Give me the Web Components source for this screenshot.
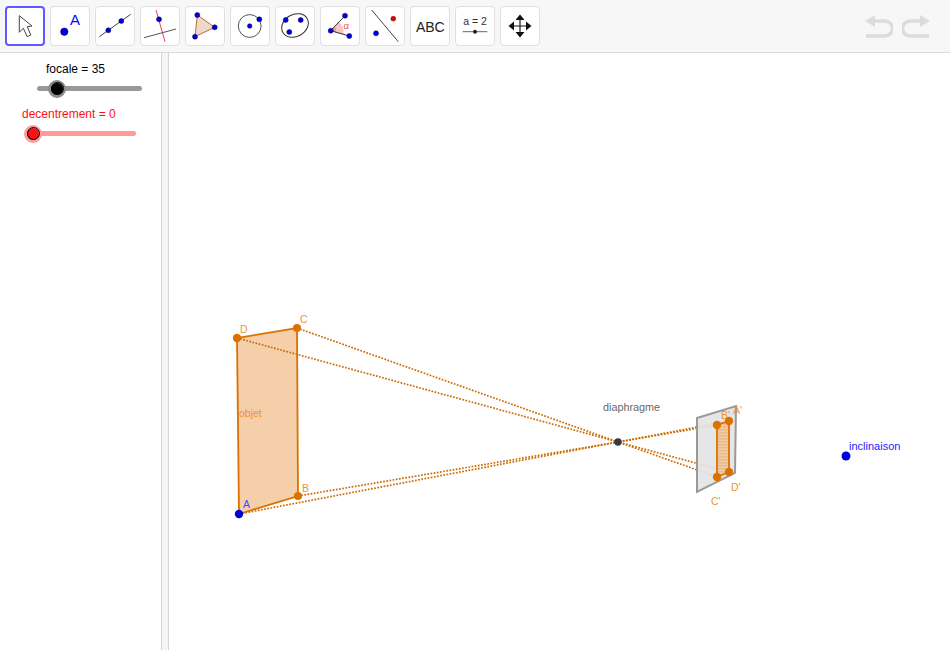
<!DOCTYPE html>
<html>
<head>
<meta charset="utf-8">
<title>focale</title>
<style>
	html, body { margin: 0; height: 100%; background: #fff; overflow: hidden; }
	body { font-family: "Liberation Sans", Arial, sans-serif; }
</style>
</head>
<body>
<ggb-app>
	<ggb-toolbar slot="toolbar">
		<ggb-tool active>
			<svg viewBox="0 0 40 40"><path d="M14.300 9.700v16.600l4-4 4 8.400 3.400-1.700-3.400-8.300 4.700-.7z" fill="#fff" stroke="#444" stroke-width="1" stroke-linejoin="round"/></svg>
		</ggb-tool>
		<ggb-tool>
			<svg viewBox="0 0 40 40"><circle cx="14.300" cy="25.700" r="3.700" fill="#0000d8" stroke="#000060" stroke-width=".5"/><text x="20" y="19" font-size="15" fill="#0a0aee">A</text></svg>
		</ggb-tool>
		<ggb-tool>
			<svg viewBox="0 0 40 40"><path d="M4.300 30.700L35.700 8.300" stroke="#444" stroke-width="1"/><circle cx="13.300" cy="24.300" r="2.500" fill="#0000d8" stroke="#000060" stroke-width=".5"/><circle cx="26.300" cy="15" r="2.500" fill="#0000d8" stroke="#000060" stroke-width=".5"/></svg>
		</ggb-tool>
		<ggb-tool>
			<svg viewBox="0 0 40 40"><path d="M16 4l9 31.700" stroke="#f03c50" stroke-width="1"/><path d="M4 31.700L36 23" stroke="#555" stroke-width="1"/><circle cx="19" cy="13.300" r="2.500" fill="#0000d8" stroke="#000060" stroke-width=".5"/></svg>
		</ggb-tool>
		<ggb-tool>
			<svg viewBox="0 0 40 40"><path d="M12.300 9L29.700 21.300 10 30.700z" fill="#eed8c8" stroke="#b8703a" stroke-width="1"/><circle cx="12.300" cy="9" r="2.500" fill="#0000d8" stroke="#000060" stroke-width=".5"/><circle cx="29.700" cy="21.300" r="2.500" fill="#0000d8" stroke="#000060" stroke-width=".5"/><circle cx="10" cy="30.700" r="2.500" fill="#0000d8" stroke="#000060" stroke-width=".5"/></svg>
		</ggb-tool>
		<ggb-tool>
			<svg viewBox="0 0 40 40"><circle cx="19.700" cy="20" r="11.400" fill="none" stroke="#555" stroke-width="1"/><circle cx="19.700" cy="20" r="2.300" fill="#0000d8" stroke="#000060" stroke-width=".5"/><circle cx="29.300" cy="13.300" r="2.500" fill="#0000d8" stroke="#000060" stroke-width=".5"/></svg>
		</ggb-tool>
		<ggb-tool>
			<svg viewBox="0 0 40 40"><ellipse cx="20" cy="19.500" rx="14" ry="11" transform="rotate(-30 20 19.500)" fill="none" stroke="#333" stroke-width="1"/><circle cx="10.700" cy="14" r="2.500" fill="#0000d8" stroke="#000060" stroke-width=".5"/><circle cx="25.700" cy="14" r="2.500" fill="#0000d8" stroke="#000060" stroke-width=".5"/><circle cx="14.300" cy="26" r="2.500" fill="#0000d8" stroke="#000060" stroke-width=".5"/></svg>
		</ggb-tool>
		<ggb-tool>
			<svg viewBox="0 0 40 40"><path d="M10.700 24.700l7.600-9.300a13 13 0 0 1 5 13.300z" fill="#fbc4c4"/><path d="M10.700 24.700l3.300-4a6 6 0 0 1 2 5.800z" fill="#d08a50" opacity=".6"/><path d="M10.700 24.700L25 9.700M10.700 24.700L29.300 30" stroke="#333" stroke-width="1" fill="none"/><circle cx="25" cy="9.700" r="2.500" fill="#0000d8" stroke="#000060" stroke-width=".5"/><circle cx="10.700" cy="24.700" r="2.500" fill="#0000d8" stroke="#000060" stroke-width=".5"/><circle cx="29.300" cy="30" r="2.500" fill="#0000d8" stroke="#000060" stroke-width=".5"/><text x="23.500" y="23" font-size="9.500" fill="#f45050">α</text></svg>
		</ggb-tool>
		<ggb-tool>
			<svg viewBox="0 0 40 40"><path d="M6.700 4l26.600 31.700" stroke="#444" stroke-width="1"/><circle cx="28.300" cy="12.700" r="2.400" fill="#e00000" stroke="#600000" stroke-width=".5"/><circle cx="11" cy="27.300" r="2.500" fill="#0000d8" stroke="#000060" stroke-width=".5"/></svg>
		</ggb-tool>
		<ggb-tool>
			<svg viewBox="0 0 40 40"><text x="20.300" y="25.500" font-size="14" fill="#222" text-anchor="middle">ABC</text></svg>
		</ggb-tool>
		<ggb-tool>
			<svg viewBox="0 0 40 40"><text x="20" y="19" font-size="10.500" fill="#333" text-anchor="middle">a = 2</text><path d="M7.700 25.700h24.600" stroke="#666" stroke-width="1"/><circle cx="20" cy="25.700" r="2" fill="#222"/></svg>
		</ggb-tool>
		<ggb-tool>
			<svg viewBox="0 0 40 40"><path d="M20 10v20M10 20h20" stroke="#111" stroke-width="1.100"/><path d="M20 8.500l-4.500 5.500h9zM20 31.500l-4.500-5.500h9zM8.500 20l5.500-4.500v9zM31.500 20l-5.500-4.500v9z" fill="#111"/></svg>
		</ggb-tool>
		<ggb-history slot="end"></ggb-history>
	</ggb-toolbar>
	<ggb-panel slot="panel">
		<ggb-slider label="focale = 35" color="#000000" track="#999999" ring="#8c8c8c" left="37" width="105" thumb="20" text="46"></ggb-slider>
		<ggb-slider label="decentrement = 0" color="#ff1010" track="#ff9a9a" ring="#ff9a9a" left="27" width="109" thumb="6" text="22"></ggb-slider>
	</ggb-panel>
	<ggb-canvas slot="canvas"></ggb-canvas>
</ggb-app>
<script>
class GgbApp extends HTMLElement {
	constructor() {
		super();
		this.attachShadow({ mode: 'open' });
		this.shadowRoot.innerHTML = `
			<style>
				:host { display: grid; grid-template: 53px 1fr / 161px 8px 1fr; width: 950px; height: 650px; overflow: hidden; }
				.top { grid-column: 1 / -1; }
				.divider { background: #f5f5f5; border-left: 1px solid #d4d4d4; border-right: 1px solid #d4d4d4; box-sizing: border-box; }
			</style>
			<div class="top"><slot name="toolbar"></slot></div>
			<slot name="panel"></slot>
			<div class="divider"></div>
			<slot name="canvas"></slot>
		`;
	}
}

class GgbToolbar extends HTMLElement {
	constructor() {
		super();
		this.attachShadow({ mode: 'open' });
		this.shadowRoot.innerHTML = `
			<style>
				:host { display: flex; align-items: center; justify-content: space-between; box-sizing: border-box; height: 53px; padding: 0 0 1px 5px; background: #f7f7f7; border-bottom: 1px solid #dcdcdc; }
				.tools { display: flex; gap: 5px; }
			</style>
			<div class="tools"><slot></slot></div>
			<slot name="end"></slot>
		`;
	}
}

class GgbTool extends HTMLElement {
	constructor() {
		super();
		this.attachShadow({ mode: 'open' });
		this.shadowRoot.innerHTML = `
			<style>
				:host { display: block; box-sizing: border-box; width: 40px; height: 40px; background: #fff; border: 1px solid #e0e0e0; border-radius: 4px; position: relative; }
				:host([active]) { border: 2px solid #6557ff; }
				::slotted(svg) { position: absolute; left: -1px; top: -1px; width: 40px; height: 40px; font-family: "Liberation Sans", Arial, sans-serif; }
				:host([active]) ::slotted(svg) { left: -2px; top: -2px; }
			</style>
			<slot></slot>
		`;
	}
}

class GgbHistory extends HTMLElement {
	constructor() {
		super();
		this.attachShadow({ mode: 'open' });
		this.shadowRoot.innerHTML = `
			<style>
				:host { display: flex; gap: 9px; margin-right: 20px; }
				svg { width: 28px; height: 24px; display: block; }
				path { fill: none; stroke: #dcdcdc; stroke-width: 3.500; }
				.head { fill: #dcdcdc; stroke: none; }
			</style>
			<svg viewBox="0 0 28 24"><path d="M6 7h14a7.500 7.500 0 0 1 0 15H1"/><path class="head" d="M0 7l10-6v12z"/></svg>
			<svg viewBox="0 0 28 24"><path d="M22 7H8a7.500 7.500 0 0 0 0 15h19"/><path class="head" d="M28 7l-10-6v12z"/></svg>
		`;
	}
}

class GgbPanel extends HTMLElement {
	constructor() {
		super();
		this.attachShadow({ mode: 'open' });
		this.shadowRoot.innerHTML = `
			<style>
				:host { display: flex; flex-direction: column; gap: 6px; padding-top: 8px; background: #fff; }
			</style>
			<slot></slot>
		`;
	}
}

class GgbSlider extends HTMLElement {
	constructor() {
		super();
		this.attachShadow({ mode: 'open' });
	}

	connectedCallback() {
		const a = (name) => this.getAttribute(name);
		this.shadowRoot.innerHTML = `
			<style>
				:host { display: block; height: 39px; }
				.label { margin-left: ${a('text')}px; font: 12px/16px "Liberation Sans", Arial, sans-serif; color: ${a('color')}; white-space: nowrap; }
				.track { position: relative; margin: 9px 0 0 ${a('left')}px; width: ${a('width')}px; height: 5px; border-radius: 3px; background: ${a('track')}; }
				.thumb { position: absolute; left: ${a('thumb') - 9}px; top: -6.500px; box-sizing: border-box; width: 18px; height: 18px; border-radius: 50%; background: ${a('color')}; border: 3px solid ${a('ring')}; }
				.thumb::after { content: ""; position: absolute; inset: -0.500px; border-radius: 50%; border: 1px solid #000; }
			</style>
			<div class="label">${a('label')}</div>
			<div class="track"><div class="thumb"></div></div>
		`;
	}
}

class GgbCanvas extends HTMLElement {
	constructor() {
		super();
		this.attachShadow({ mode: 'open' });
		// coordinates are page pixels, the svg is moved back by its own offset
		const S = [618, 442];
		const O = { A: [239, 514], B: [298, 496], C: [297, 328], D: [237, 338] };
		const I = { A: [729, 421], B: [717, 425], C: [717, 477], D: [729, 472] };
		const rays = Object.keys(O).map((k) => {
			const o = O[k], i = I[k];
			return `<path class="ray" d="M${o} L${S} L${i}"/>`;
		}).join('');
		const poly = (p) => p.map((k) => k.join(',')).join(' ');
		const dot = (p, fill, r) => `<circle cx="${p[0]}" cy="${p[1]}" r="${r}" fill="${fill}"/>`;
		const orange = '#dc7000';
		this.shadowRoot.innerHTML = `
			<style>
				:host { display: block; position: relative; background: #fff; }
				svg { position: absolute; left: 0; top: 0; width: 781px; height: 597px; font-family: "Liberation Sans", Arial, sans-serif; }
				.ray { fill: none; stroke: #cc6a00; stroke-width: 1.700; stroke-dasharray: 1.700 1.500; }
				.lbl { font-size: 10.500px; fill: #ee9330; }
			</style>
			<svg viewBox="169 53 781 597">
				<defs>
					<pattern id="hatch" width="3" height="3" patternUnits="userSpaceOnUse">
						<rect width="3" height="3" fill="#f1cba6"/>
						<rect width="3" height="1.500" fill="#ecbb8a"/>
					</pattern>
				</defs>
				<polygon points="${poly([O.A, O.B, O.C, O.D])}" fill="#f4cfa9" stroke="${orange}" stroke-width="1.800"/>
				${rays}
				<polygon points="697,418 736,406 735,473 697,492" fill="#e3e3e3" fill-opacity=".9" stroke="#999" stroke-width="2"/>
				<polygon points="${poly([I.A, I.B, I.C, I.D])}" fill="url(#hatch)" stroke="${orange}" stroke-width="1.800"/>
				${dot(O.D, orange, 4.200)}${dot(O.C, orange, 4)}${dot(O.B, orange, 4)}${dot(O.A, '#0000d8', 4.200)}
				${dot(I.A, orange, 4.200)}${dot(I.B, orange, 4.200)}${dot(I.C, orange, 4.200)}${dot(I.D, orange, 4.200)}
				${dot(S, '#36393f', 3.700)}
				${dot([846, 456], '#0000d8', 4.500)}
				<text class="lbl" x="240" y="333">D</text>
				<text class="lbl" x="300" y="323">C</text>
				<text class="lbl" x="302" y="492">B</text>
				<text x="243" y="508" font-size="10.500" fill="#4646ff">A</text>
				<text class="lbl" x="239" y="417">objet</text>
				<text class="lbl" x="721" y="419">B'</text>
				<text class="lbl" x="733" y="414">A'</text>
				<text class="lbl" x="731" y="491">D'</text>
				<text class="lbl" x="711" y="505">C'</text>
				<text x="603" y="411" font-size="10.800" fill="#686868">diaphragme</text>
				<text x="849" y="450" font-size="11" fill="#2222ff">inclinaison</text>
			</svg>
		`;
	}
}

customElements.define('ggb-app', GgbApp);
customElements.define('ggb-toolbar', GgbToolbar);
customElements.define('ggb-tool', GgbTool);
customElements.define('ggb-history', GgbHistory);
customElements.define('ggb-panel', GgbPanel);
customElements.define('ggb-slider', GgbSlider);
customElements.define('ggb-canvas', GgbCanvas);
</script>
</body>
</html>
